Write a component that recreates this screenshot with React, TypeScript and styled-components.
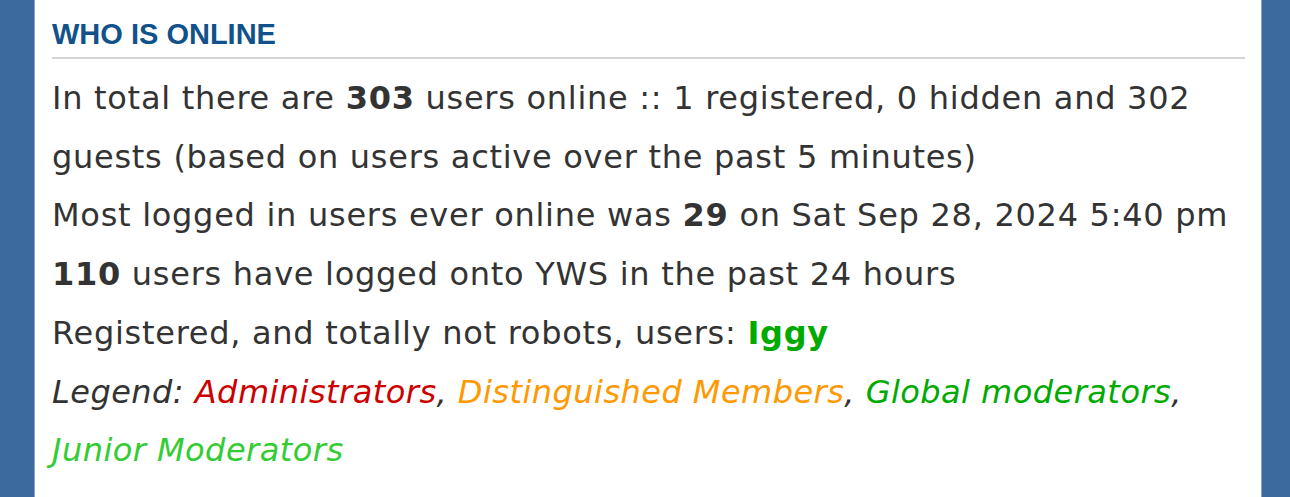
import styled, { createGlobalStyle } from "styled-components";

const GlobalStyle = createGlobalStyle`
  html, body {
    margin: 0;
    padding: 0;
    background: #3c699e;
  }
`;

// Page frame: blue sides with a white content column
const Page = styled.div`
  height: 497px;
  padding: 0 28px 0 34px;
  overflow: hidden;
`;

const Panel = styled.div`
  height: 100%;
  background: #ffffff;
  border-left: 1px solid #8aa6c8;
  border-right: 1px solid #8aa6c8;
  padding: 18px 16px 0 17px;
`;

const StatBlock = styled.div`
  color: #333333;
  font-family: Verdana, "DejaVu Sans", sans-serif;
  font-size: 32px;
  letter-spacing: 0.72px;
`;

const BlockTitle = styled.h3`
  margin: 0 0 10px;
  padding: 0 0 6px;
  border-bottom: 2px solid #d4d4d4;
  font-family: Arial, "Liberation Sans", sans-serif;
  font-size: 29px;
  line-height: normal;
  letter-spacing: 0;
  font-weight: bold;
  color: #105289;
  text-transform: uppercase;
`;

const Line = styled.p`
  margin: 0;
  line-height: 58.7px;
`;

const Legend = styled(Line)`
  font-style: italic;
  letter-spacing: 0.46px;
`;

const Group = styled.span<{ $color: string; $bold?: boolean }>`
  color: ${(p) => p.$color};
  font-weight: ${(p) => (p.$bold ? "bold" : "normal")};
`;

const legendGroups = [
  { name: "Administrators", color: "#cc0000" },
  { name: "Distinguished Members", color: "#ff9900" },
  { name: "Global moderators", color: "#00aa00" },
  { name: "Junior Moderators", color: "#33cc33" },
];

export default function App() {
  return (
    <>
      <GlobalStyle />
      <Page>
        <Panel>
          <StatBlock>
            <BlockTitle>Who is online</BlockTitle>
            <Line>
              In total there are <strong>303</strong> users online :: 1 registered, 0 hidden and 302
              guests (based on users active over the past 5 minutes)
            </Line>
            <Line>
              Most logged in users ever online was <strong>29</strong> on Sat Sep 28, 2024 5:40 pm
            </Line>
            <Line>
              <strong>110</strong> users have logged onto YWS in the past 24 hours
            </Line>
            <Line>
              Registered, and totally not robots, users: <Group $color="#00aa00" $bold>Iggy</Group>
            </Line>
            <Legend>
              Legend:{" "}
              {legendGroups.map((g, i) => (
                <span key={g.name}>
                  <Group $color={g.color}>{g.name}</Group>
                  {i < legendGroups.length - 1 ? ", " : ""}
                </span>
              ))}
            </Legend>
          </StatBlock>
        </Panel>
      </Page>
    </>
  );
}
